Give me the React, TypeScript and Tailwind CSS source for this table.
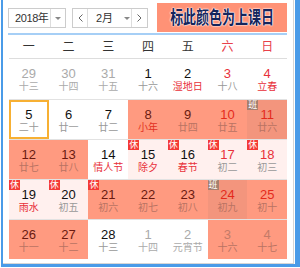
import React from "react"

type Kind = "plain" | "cls" | "rest"

interface Day {
  d: number
  lunar: string
  kind?: Kind
  dim?: boolean // outside current month
  red?: boolean // weekend digit
  fest?: boolean // festival / solar term, red lunar text
  badge?: "休" | "班"
  today?: boolean
}

const weeks: Day[][] = [
  [
    { d: 29, lunar: "十三", dim: true },
    { d: 30, lunar: "十四", dim: true },
    { d: 31, lunar: "十五", dim: true },
    { d: 1, lunar: "十六" },
    { d: 2, lunar: "湿地日", fest: true },
    { d: 3, lunar: "十八", red: true },
    { d: 4, lunar: "立春", red: true, fest: true },
  ],
  [
    { d: 5, lunar: "二十", today: true },
    { d: 6, lunar: "廿一" },
    { d: 7, lunar: "廿二" },
    { d: 8, lunar: "小年", kind: "cls", fest: true },
    { d: 9, lunar: "廿四", kind: "cls" },
    { d: 10, lunar: "廿五", kind: "cls", red: true },
    { d: 11, lunar: "廿六", kind: "cls", red: true, badge: "班" },
  ],
  [
    { d: 12, lunar: "廿七", kind: "cls" },
    { d: 13, lunar: "廿八", kind: "cls" },
    { d: 14, lunar: "情人节", fest: true },
    { d: 15, lunar: "除夕", kind: "rest", badge: "休", fest: true },
    { d: 16, lunar: "春节", kind: "rest", badge: "休", fest: true },
    { d: 17, lunar: "初二", kind: "rest", badge: "休", red: true },
    { d: 18, lunar: "初三", kind: "rest", badge: "休", red: true },
  ],
  [
    { d: 19, lunar: "雨水", kind: "rest", badge: "休", fest: true },
    { d: 20, lunar: "初五", kind: "rest", badge: "休" },
    { d: 21, lunar: "初六", kind: "cls", badge: "休" },
    { d: 22, lunar: "初七", kind: "cls" },
    { d: 23, lunar: "初八", kind: "cls" },
    { d: 24, lunar: "初九", kind: "cls", red: true, badge: "班" },
    { d: 25, lunar: "初十", kind: "cls", red: true },
  ],
  [
    { d: 26, lunar: "十一", kind: "cls" },
    { d: 27, lunar: "十二", kind: "cls" },
    { d: 28, lunar: "十三" },
    { d: 1, lunar: "十四", dim: true },
    { d: 2, lunar: "元宵节", dim: true },
    { d: 3, lunar: "十六", kind: "cls", dim: true },
    { d: 4, lunar: "十七", kind: "cls", dim: true },
  ],
]

const Caret = () => (
  <span className="block shrink-0 w-0 h-0 border-l-[3px] border-r-[3px] border-t-[3px] border-l-transparent border-r-transparent border-t-[#888]" />
)

const DayCell = ({ day }: { day: Day }) => {
  const cls = day.kind === "cls"
  const work = day.badge === "班"

  let bg = "bg-white"
  if (cls) bg = work ? "bg-[#f3957d]" : "bg-[#ff9a80]"
  else if (day.kind === "rest") bg = "bg-[#fff0ee]"

  // digit colour
  let digit = "text-[#111]"
  if (cls) {
    if (day.dim) digit = "text-[#c47a68]"
    else if (day.red) digit = "text-[#e42a1c]"
    else digit = "text-[#6a1a10]"
  } else if (day.dim) digit = "text-[#aaa]"
  else if (day.red) digit = "text-[#e8303a]"

  // lunar colour
  let lunar = "text-[#999]"
  if (day.fest) lunar = cls ? "text-[#e2301f]" : "text-[#e8303a]"
  else if (cls) lunar = "text-[#b97363]"
  else if (day.dim) lunar = "text-[#aaa]"

  return (
    <div
      className={`relative h-full flex flex-col items-center ${bg} ${
        day.today ? "border-2 border-[#f7b033] pt-[5px]" : "pt-[7px]"
      }`}
    >
      {day.badge && (
        <span
          className={`absolute top-0 left-0 w-[11px] h-[10px] text-[9px] leading-[10px] text-center text-white ${
            work ? "bg-[#a48070]" : "bg-[#f43a36]"
          }`}
        >
          {day.badge}
        </span>
      )}
      <span className={`text-[13px] leading-[15px] ${digit}`}>{day.d}</span>
      <span className={`text-[10px] leading-[12px] whitespace-nowrap ${lunar}`}>{day.lunar}</span>
    </div>
  )
}

export default function App() {
  return (
    <div className="w-[300px] h-[268px] bg-white overflow-hidden font-['Liberation_Sans','Noto_Sans_CJK_SC',sans-serif]">
      <div className="ml-px w-[299px] h-[267px] border-l-2 border-r-[5px] border-b-[3px] border-[#4a9be8] flex">
        <div className="w-[291px] h-[264px] border-r border-b border-[#d6d6d6] flex flex-col">
          {/* toolbar */}
          <div className="h-[33px] flex items-start pl-[5px]">
            <div className="mt-[8px] h-[20px] w-[58px] flex border border-[#ccc] bg-white text-[11px] text-[#333] whitespace-nowrap">
              <span className="w-[41px] pl-[6px] leading-[18px] tracking-[-0.4px]">2018年</span>
              <span className="flex-1 border-l border-[#ddd] flex items-center justify-center">
                <Caret />
              </span>
            </div>
            <div className="mt-[8px] ml-[6px] h-[20px] w-[76px] flex border border-[#ccc] bg-white text-[11px] text-[#333] whitespace-nowrap">
              <span className="w-[15px] flex items-center justify-center border-r border-[#ddd]">
                <svg width="5" height="8" viewBox="0 0 5 8" fill="none">
                  <polyline points="4.5,0.5 1,4 4.5,7.5" stroke="#666" strokeWidth="1" />
                </svg>
              </span>
              <span className="w-[44px] flex items-center pl-[8px] gap-[11px] border-r border-[#ddd]">
                <span className="leading-[18px]">2月</span>
                <Caret />
              </span>
              <span className="flex-1 flex items-center justify-center">
                <svg width="5" height="8" viewBox="0 0 5 8" fill="none">
                  <polyline points="0.5,0.5 4,4 0.5,7.5" stroke="#666" strokeWidth="1" />
                </svg>
              </span>
            </div>
            <div className="mt-[3px] ml-[9px] h-[29px] w-[130px] bg-[#ff9276] flex items-center justify-center">
              <span className="inline-block scale-x-[0.72] text-[18px] leading-[20px] font-bold whitespace-nowrap text-[#15255c] [text-shadow:0_0_2px_#fff,0_0_2px_#fff,0_0_1px_#fff]">
                标此颜色为上课日
              </span>
            </div>
          </div>
          <div className="h-[2px] ml-[5px] w-[279px] bg-[#a6cff6]" />

          {/* calendar */}
          <div className="ml-[6px] w-[278px]">
            <div className="h-[24px] grid grid-cols-7 items-center border-b border-[#ddd] text-[12px] text-[#333] text-center">
              <span>一</span>
              <span>二</span>
              <span>三</span>
              <span>四</span>
              <span>五</span>
              <span className="text-[#e8404a]">六</span>
              <span className="text-[#e8404a]">日</span>
            </div>
            {weeks.map((w, i) => (
              <div
                key={i}
                className={`h-[40px] grid grid-cols-7 ${i > 0 ? "border-t border-[#e2e2e2]" : ""}`}
              >
                {w.map((day, j) => (
                  <DayCell key={j} day={day} />
                ))}
              </div>
            ))}
          </div>
        </div>
      </div>
    </div>
  )
}
